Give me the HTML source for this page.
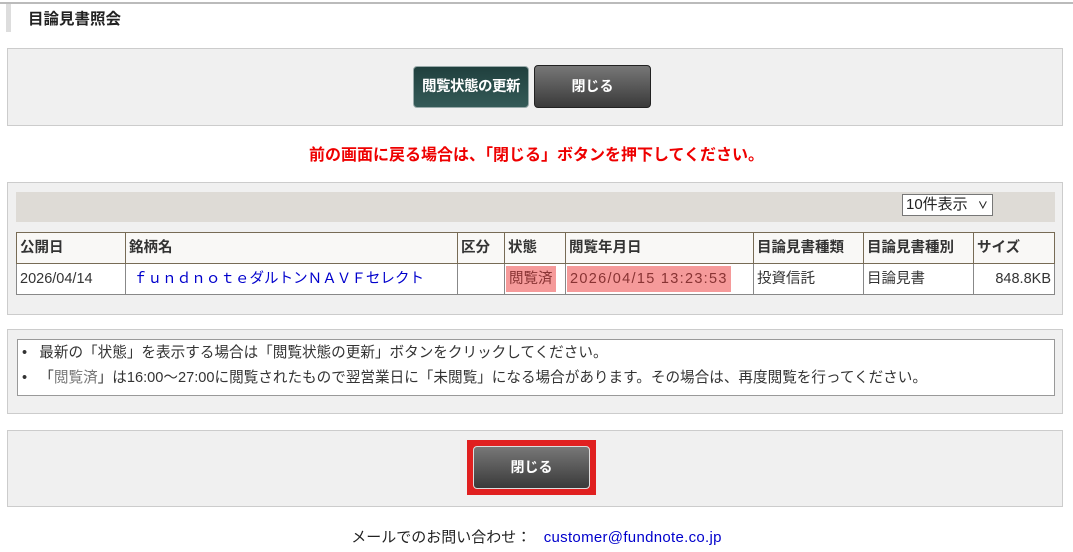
<!DOCTYPE html>
<html><head><meta charset="utf-8"><style>
body{margin:0;width:1073px;height:552px;background:#fff;position:relative;font-family:"Liberation Sans","Noto Sans CJK JP",sans-serif;font-size:14px;color:#333;overflow:hidden}
.a{position:absolute}
.panel{position:absolute;left:7px;width:1056px;background:#f0f0f0;border:1px solid #ccc;box-sizing:border-box}
.btn{position:absolute;color:#fff;font-weight:bold;font-size:14px;text-align:center;border-radius:4px;box-sizing:border-box;border:1px solid #222}
.dark{background:linear-gradient(#777,#3a3a3a)}
table{border-collapse:collapse;position:absolute;left:16px;top:232px;width:1039px;font-size:14.5px;table-layout:fixed}
td,th{border:1px solid #888;height:30px;padding:0 3px;text-align:left;white-space:nowrap;overflow:hidden;vertical-align:middle;line-height:30px}
th{background:#f9f8f6;font-weight:bold;border-color:#776b55}
.hl{background:#f59a9a;padding:0 3px;display:inline-block;line-height:26px;vertical-align:middle}
</style></head><body>
<div class="a" style="left:0;top:2px;width:1073px;height:2px;background:#bbb"></div>
<div class="a" style="left:6px;top:4px;width:5px;height:28px;background:#ddd"></div>
<div class="a" style="left:28px;top:7px;font-weight:bold;font-size:15.5px;color:#222">目論見書照会</div>

<div class="panel" style="top:48px;height:78px"></div>
<div class="btn" style="left:413px;top:66px;width:116px;height:42px;line-height:40px;background:linear-gradient(#20403e,#345a57);border-color:#9aa;font-size:14.5px;letter-spacing:-0.5px">閲覧状態の更新</div>
<div class="btn dark" style="left:534px;top:65px;width:117px;height:43px;line-height:41px">閉じる</div>

<div class="a" style="left:0;width:1073px;top:141px;text-align:center;color:#e00;font-weight:bold;font-size:16px">前の画面に戻る場合は、「閉じる」ボタンを押下してください。</div>

<div class="panel" style="top:182px;height:133px"></div>
<div class="a" style="left:16px;top:192px;width:1039px;height:30px;background:#dedbd6"></div>
<div class="a" style="left:902px;top:194px;width:91px;height:22px;border:1px solid #777;background:#fff;box-sizing:border-box;font-size:15px;line-height:20px;padding-left:3px;color:#222">10件表示 <span style="font-size:10px;font-weight:bold;margin-left:6px">&#8744;</span></div>
<table>
<colgroup><col style="width:109px"><col style="width:332px"><col style="width:47px"><col style="width:61px"><col style="width:188px"><col style="width:110px"><col style="width:110px"><col></colgroup>
<tr><th>公開日</th><th>銘柄名</th><th>区分</th><th>状態</th><th>閲覧年月日</th><th>目論見書種類</th><th>目論見書種別</th><th>サイズ</th></tr>
<tr style="background:#fff"><td>2026/04/14</td><td style="color:#00c;letter-spacing:0.05px">&nbsp;ｆｕｎｄｎｏｔｅダルトンＮＡＶＦセレクト</td><td></td><td style="padding:0 1px"><span class="hl" style="color:#833">閲覧済</span></td><td style="padding:0 1px"><span class="hl" style="color:#833;letter-spacing:1.3px">2026/04/15 13:23:53</span></td><td>投資信託</td><td>目論見書</td><td style="text-align:right">848.8KB</td></tr>
</table>

<div class="panel" style="top:329px;height:85px"></div>
<div class="a" style="left:17px;top:339px;width:1038px;height:57px;background:#fff;border:1px solid #999;box-sizing:border-box;font-size:14.6px;line-height:25px;padding:1px 0 0 4px;color:#333">
<div>•&nbsp;&nbsp; 最新の「状態」を表示する場合は「閲覧状態の更新」ボタンをクリックしてください。</div>
<div>•&nbsp;&nbsp; 「<span style="color:#777">閲覧済</span>」は16:00～27:00に閲覧されたもので翌営業日に「未閲覧」になる場合があります。その場合は、再度閲覧を行ってください。</div>
</div>

<div class="panel" style="top:430px;height:77px"></div>
<div class="a" style="left:467px;top:440px;width:129px;height:55px;background:#e02020"></div>
<div class="btn dark" style="left:473px;top:446px;width:117px;height:43px;line-height:41px;border-color:#ddd">閉じる</div>

<div class="a" style="left:0;width:1073px;top:526px;text-align:center;font-size:15px;color:#222">メールでのお問い合わせ：&nbsp;&nbsp; <span style="color:#00c;letter-spacing:0.3px">customer@fundnote.co.jp</span></div>
</body></html>
